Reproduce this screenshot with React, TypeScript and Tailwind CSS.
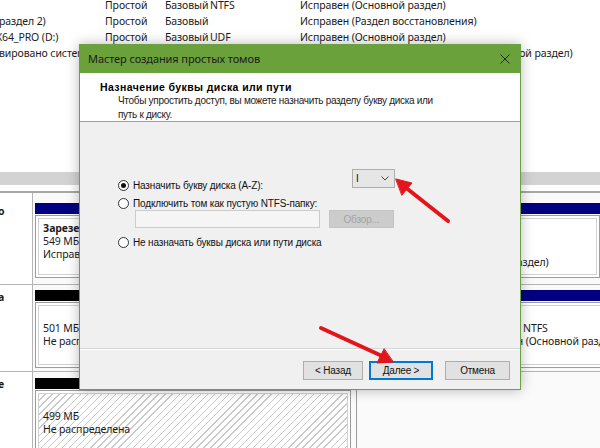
import React from "react";

type VolRow = { name: string; shift: string; layout: string; kind: string; fs: string; status: string };

const volumes: VolRow[] = [
  { name: "", shift: "ml-0", layout: "Простой", kind: "Базовый", fs: "NTFS", status: "Исправен (Основной раздел)" },
  { name: "раздел 2)", shift: "ml-[-1px]", layout: "Простой", kind: "Базовый", fs: "", status: "Исправен (Раздел восстановления)" },
  { name: "X64_PRO (D:)", shift: "ml-[-4px]", layout: "Простой", kind: "Базовый", fs: "UDF", status: "Исправен (Основной раздел)" },
  {
    name: "вировано системой",
    shift: "ml-[-1px]",
    layout: "Простой",
    kind: "Базовый",
    fs: "NTFS",
    status: "Исправен (Система, Активен, Дамп, Основной раздел)",
  },
];

function Radio({ checked }: { checked?: boolean }) {
  return (
    <span className="flex h-[11px] w-[11px] shrink-0 items-center justify-center rounded-full border border-[#333] bg-white">
      {checked ? <span className="h-[5px] w-[5px] rounded-full bg-[#111]" /> : null}
    </span>
  );
}

function PartBox({ children, hatched }: { children?: React.ReactNode; hatched?: boolean }) {
  return (
    <div className="flex-1 border border-[#9c9c9c] bg-white p-[2px]">
      <div
        className={
          "h-full border border-[#d2d2d2] pl-[4px] leading-[13px] whitespace-nowrap overflow-hidden " +
          (hatched
            ? "bg-[repeating-linear-gradient(135deg,#ffffff_0px,#ffffff_4px,#c9c9c9_4px,#c9c9c9_5px)]"
            : "bg-white")
        }
      >
        {children}
      </div>
    </div>
  );
}

export default function App() {
  return (
    <div className="relative h-[448px] w-[600px] overflow-hidden bg-white font-['Noto_Sans',sans-serif] text-[10.5px] tracking-[-0.1px] text-[#1b1b1b]">
      {/* volume list */}
      <div className="mt-[-2px]">
        {volumes.map((v, i) => (
          <div
            key={i}
            className="grid h-[16px] grid-cols-[105px_60px_45px_90px_1fr] items-center whitespace-nowrap"
          >
            <div className="overflow-hidden">
              <div className={v.shift}>{v.name}</div>
            </div>
            <div>{v.layout}</div>
            <div>{v.kind}</div>
            <div>{v.fs}</div>
            <div>{v.status}</div>
          </div>
        ))}
      </div>
      <div className="h-[110px]" />

      {/* splitter */}
      <div className="h-[13px] bg-[#d3d3d3]" />
      <div className="h-[6px] bg-white" />
      <div className="h-[2px] bg-[#a6a6a6]" />

      {/* disk map */}
      <div className="bg-[#fafafa]">
        {/* disk 0 */}
        <div className="flex h-[92px] border-b border-[#b5b5b5]">
          <div className="w-[33px] shrink-0 overflow-hidden border-r border-[#b5b5b5] bg-white pt-[11px] font-bold">
            <span className="ml-[-2px]">о</span>
          </div>
          <div className="flex flex-1 gap-[3px] pl-[2px] pt-[10px] pb-[6px]">
            <div className="flex w-[351px] flex-col">
              <div className="h-[11px] bg-[#000080]" />
              <div className="mt-[1px] flex flex-1">
                <PartBox>
                  <div className="pt-[3px] font-bold">Зарезервировано системой</div>
                  <div>549 МБ NTFS</div>
                  <div>Исправен (Система, Активен, Основной раздел)</div>
                </PartBox>
              </div>
            </div>
            <div className="flex flex-1 flex-col">
              <div className="h-[11px] bg-[#000080]" />
              <div className="mt-[1px] flex flex-1">
                <PartBox>
                  <div className="pl-[6px]">
                    <div className="pt-[11px] font-bold">Windows (C:)</div>
                    <div>97,12 ГБ NTFS</div>
                    <div>Исправен (Основной раздел)</div>
                  </div>
                </PartBox>
              </div>
            </div>
          </div>
        </div>

        {/* disk 1 */}
        <div className="flex h-[87px] border-b border-[#b5b5b5]">
          <div className="w-[33px] shrink-0 overflow-hidden border-r border-[#b5b5b5] bg-white pt-[5px] font-bold">
            <span className="ml-[-2px]">а</span>
          </div>
          <div className="flex flex-1 gap-[3px] pl-[2px] pt-[5px] pb-[3px]">
            <div className="flex w-[428px] flex-col">
              <div className="h-[11px] bg-black" />
              <div className="mt-[1px] flex flex-1">
                <PartBox>
                  <div className="pt-[16px]">501 МБ</div>
                  <div>Не распределена</div>
                </PartBox>
              </div>
            </div>
            <div className="flex flex-1 flex-col">
              <div className="h-[11px] bg-[#000080]" />
              <div className="mt-[1px] flex flex-1">
                <PartBox>
                  <div className="pt-[16px]">465,26 ГБ NTFS</div>
                  <div>Исправен (Основной раздел)</div>
                </PartBox>
              </div>
            </div>
          </div>
        </div>

        {/* disk 2 */}
        <div className="flex h-[80px]">
          <div className="w-[33px] shrink-0 overflow-hidden border-r border-[#b5b5b5] bg-white pt-[5px] font-bold">
            <span className="ml-[-2px]">е</span>
          </div>
          <div className="flex flex-1 pl-[2px] pt-[6px]">
            <div className="flex w-[322px] flex-col border-r border-[#9c9c9c] pr-[5px]">
              <div className="h-[11px] bg-black" />
              <div className="mt-[1px] flex flex-1">
                <PartBox hatched>
                  <div className="pt-[16px]">499 МБ</div>
                  <div>Не распределена</div>
                </PartBox>
              </div>
            </div>
          </div>
        </div>
      </div>

      {/* wizard window */}
      <div className="absolute left-[79px] top-[44px] flex h-[346px] w-[442px] flex-col border border-[#6d9f44] bg-[#f0f0f0] shadow-[0_0_12px_rgba(0,0,0,0.28)]">
        <div className="flex h-[28px] shrink-0 items-center justify-between bg-[#6ba13b] pl-[8px] pr-[9px] text-[11px] tracking-[-0.1px] text-[#1a1a1a]">
          <span>Мастер создания простых томов</span>
          <svg width="10" height="10" viewBox="0 0 10 10" className="mr-[1px]">
            <path d="M0.5 0.5 L9.5 9.5 M9.5 0.5 L0.5 9.5" stroke="#1f2a14" strokeWidth="1" fill="none" />
          </svg>
        </div>

        <div className="h-[49px] shrink-0 border-b border-[#a0a0a0] bg-white pl-[20px] pt-[7px] font-['Liberation_Sans',sans-serif] text-[10px] leading-[14px] text-black">
          <div className="text-[10.5px] font-bold tracking-[0.4px]">Назначение буквы диска или пути</div>
          <div className="pl-[18px] tracking-[-0.3px] text-[#222]">
            Чтобы упростить доступ, вы можете назначить разделу букву диска или
            <br />
            путь к диску.
          </div>
        </div>

        <div className="flex-1 border-b border-[#d5d5d5] pl-[38px] pt-[47px] font-['Liberation_Sans',sans-serif] text-[10px] leading-[13px] tracking-[-0.15px] text-[#111]">
          <div className="flex items-start">
            <div className="mt-[10px] flex w-[234px] items-center gap-[4px]">
              <Radio checked />
              <span>Назначить букву диска (A-Z):</span>
            </div>
            <div className="flex h-[19px] w-[43px] items-center justify-between border border-[#adadad] bg-[#e6e6e6] pl-[3px] pr-[5px]">
              <span>I</span>
              <svg width="8" height="5" viewBox="0 0 8 5">
                <path d="M0.5 0.5 L4 4 L7.5 0.5" stroke="#444" strokeWidth="1" fill="none" />
              </svg>
            </div>
          </div>
          <div className="mt-[5px] flex items-center gap-[4px]">
            <Radio />
            <span>Подключить том как пустую NTFS-папку:</span>
          </div>
          <div className="flex gap-[9px] pl-[17px]">
            <div className="h-[18px] w-[185px] border border-[#cbcbcb] bg-[#f5f5f5]" />
            <div className="flex h-[18px] w-[65px] items-center justify-center border border-[#c4c4c4] bg-[#cccccc] text-[#a3a3a3]">
              Обзор...
            </div>
          </div>
          <div className="mt-[8px] flex items-center gap-[4px]">
            <Radio />
            <span>Не назначать буквы диска или пути диска</span>
          </div>
        </div>

        <div className="flex h-[40px] shrink-0 justify-end border-t border-white pr-[10px] pt-[11px] font-['Liberation_Sans',sans-serif] text-[10px] tracking-[-0.2px] text-[#111]">
          <div className="flex h-[19px] w-[60px] items-center justify-center border border-[#adadad] bg-[#e1e1e1]">
            &lt; Назад
          </div>
          <div className="ml-[6px] flex h-[19px] w-[64px] items-center justify-center border-2 border-[#0078d7] bg-[#e1e1e1]">
            Далее &gt;
          </div>
          <div className="ml-[12px] flex h-[19px] w-[65px] items-center justify-center border border-[#adadad] bg-[#e1e1e1]">
            Отмена
          </div>
        </div>
      </div>

      {/* red pointer arrows */}
      <svg className="pointer-events-none absolute left-0 top-0" width="600" height="448" viewBox="0 0 600 448">
        <g fill="#e4141b" stroke="#e4141b" strokeLinecap="round">
          <line x1="448" y1="221" x2="405" y2="187" strokeWidth="4" />
          <polygon points="396,179 412,183 402,195" strokeWidth="1" strokeLinejoin="round" />
          <line x1="321" y1="328" x2="382" y2="356" strokeWidth="4" />
          <polygon points="393,362 377,363 384,349" strokeWidth="1" strokeLinejoin="round" />
        </g>
      </svg>
    </div>
  );
}
